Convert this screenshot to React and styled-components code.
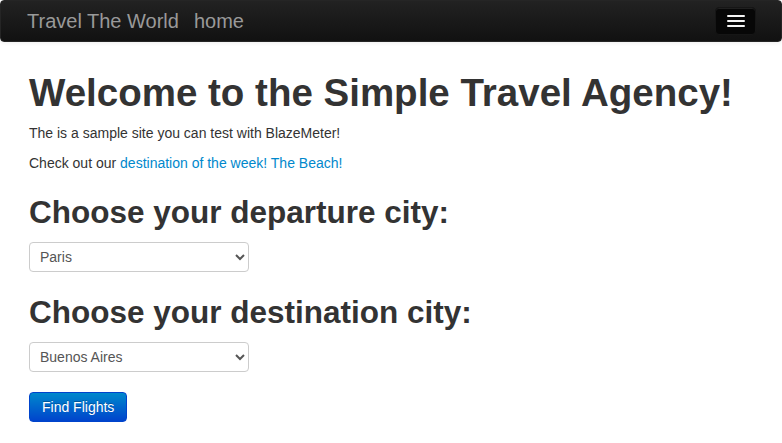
import React from 'react';
import styled, { createGlobalStyle } from 'styled-components';

const Global = createGlobalStyle`
  body {
    margin: 0;
    font-family: "Liberation Sans", Arial, sans-serif;
    font-size: 14px;
    line-height: 20px;
    color: #333;
    background: #fff;
  }
`;

const Navbar = styled.div`
  height: 40px;
  display: flex;
  align-items: center;
  padding: 0 25px 0 26px;
  background: linear-gradient(to bottom, #222, #111);
  border: 1px solid #252525;
  border-radius: 4px;
  box-shadow: 0 1px 4px rgba(0, 0, 0, 0.065);
`;

const Brand = styled.a`
  font-size: 20px;
  color: #999;
  text-decoration: none;
  margin-right: 15px;
`;

const NavLink = styled.a`
  font-size: 20px;
  color: #999;
  text-decoration: none;
`;

const Toggle = styled.button`
  margin-left: auto;
  width: 41px;
  height: 28px;
  padding: 0;
  display: flex;
  flex-direction: column;
  align-items: center;
  justify-content: center;
  gap: 3px;
  background: #070707;
  border: 1px solid #161616;
  border-radius: 4px;
  box-shadow: inset 0 1px 0 rgba(255, 255, 255, 0.1);
`;

const Bar = styled.span`
  display: block;
  width: 18px;
  height: 2px;
  background: #f5f5f5;
  border-radius: 1px;
`;

const Container = styled.div`
  padding: 0 29px;
`;

const H1 = styled.h1`
  font-size: 38.5px;
  line-height: 40px;
  font-weight: bold;
  margin: 31px 0 10px;
`;

const H2 = styled.h2`
  font-size: 31.5px;
  line-height: 40px;
  font-weight: bold;
  margin: ${(p) => p.$top || 19}px 0 10px;
`;

const P = styled.p`
  margin: 0 0 10px;
`;

const Link = styled.a`
  color: #0088cc;
  text-decoration: none;
`;

const Select = styled.select`
  display: block;
  width: 220px;
  height: 30px;
  padding: 4px 6px;
  font-family: inherit;
  font-size: 14px;
  color: #555;
  border: 1px solid #ccc;
  border-radius: 4px;
  background: #fff;
`;

const Button = styled.button`
  display: block;
  margin-top: 20px;
  padding: 4px 12px;
  height: 30px;
  font-family: inherit;
  font-size: 14px;
  color: #fff;
  text-shadow: 0 -1px 0 rgba(0, 0, 0, 0.25);
  background: linear-gradient(to bottom, #0088cc, #0044cc);
  border: 1px solid #04c;
  border-radius: 4px;
`;

export default function App() {
  return (
    <>
      <Global />
      <Navbar>
        <Brand href="#">Travel The World</Brand>
        <NavLink href="#">home</NavLink>
        <Toggle>
          <Bar />
          <Bar />
          <Bar />
        </Toggle>
      </Navbar>
      <Container>
        <H1>Welcome to the Simple Travel Agency!</H1>
        <P>The is a sample site you can test with BlazeMeter!</P>
        <P>
          Check out our <Link href="#">destination of the week! The Beach!</Link>
        </P>
        <form>
          <H2>Choose your departure city:</H2>
          <Select defaultValue="Paris">
            <option>Paris</option>
            <option>Philadelphia</option>
            <option>Boston</option>
          </Select>
          <H2 $top={20}>Choose your destination city:</H2>
          <Select defaultValue="Buenos Aires">
            <option>Buenos Aires</option>
            <option>Rome</option>
            <option>London</option>
          </Select>
          <Button type="button">Find Flights</Button>
        </form>
      </Container>
    </>
  );
}
